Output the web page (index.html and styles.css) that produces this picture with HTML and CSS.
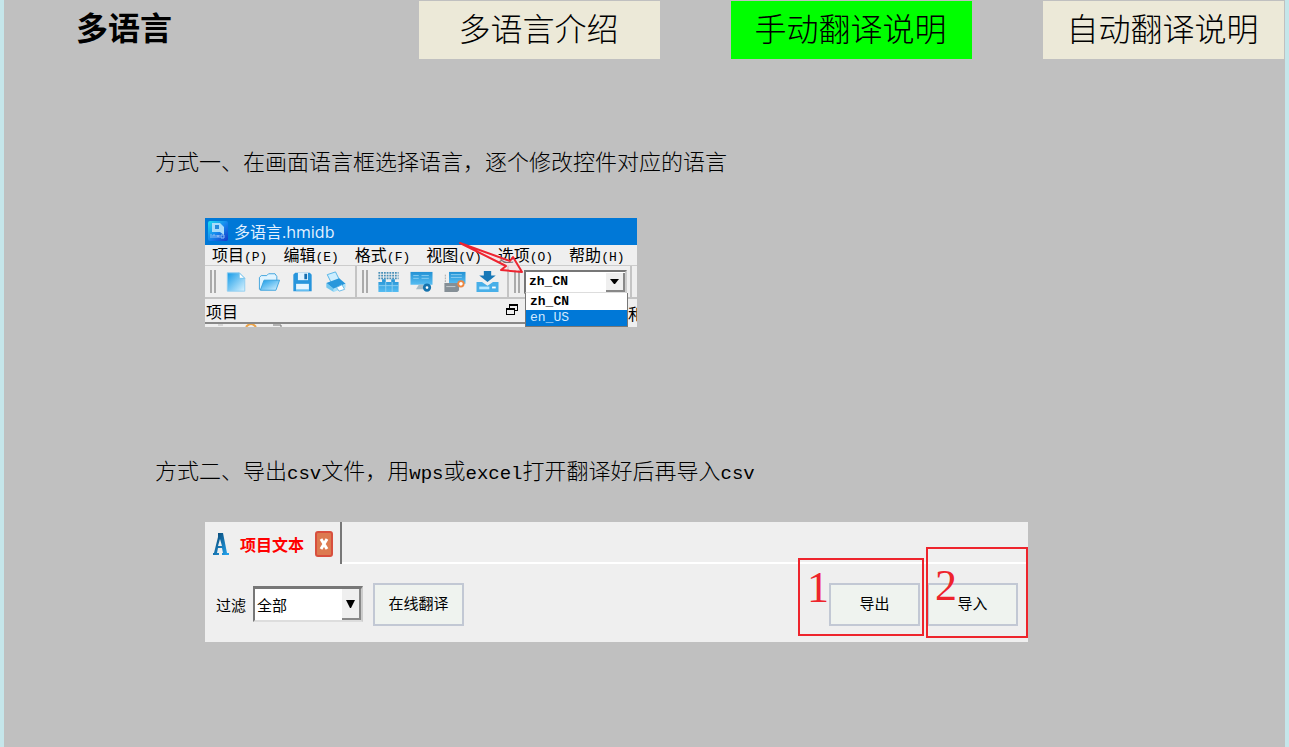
FILE: index.html
```html
<!DOCTYPE html>
<html lang="zh-CN">
<head>
<meta charset="utf-8">
<title>多语言</title>
<link rel="stylesheet" href="styles.css">
</head>
<body>
<header class="topbar">
  <h1 class="title">多语言</h1>
  <nav class="tabs">
    <button class="tab">多语言介绍</button>
    <button class="tab active">手动翻译说明</button>
    <button class="tab">自动翻译说明</button>
  </nav>
</header>
<main>
  <section class="method first">
    <p class="lead">方式一、在画面语言框选择语言，逐个修改控件对应的语言</p>
    <div class="editor">
      <div class="caption">
        <svg width="20" height="20" viewBox="0 0 20 20"><defs><linearGradient id="logo" x1="0" x2="1" y1="0" y2="1"><stop stop-color="#20e0ee"/><stop offset=".5" stop-color="#1689ee"/><stop offset="1" stop-color="#1638c8"/></linearGradient></defs><rect width="20" height="20" rx="2" fill="url(#logo)"/><path d="M4 2h8l4 4v8l-4-3H4z" fill="#a8dcfa"/><path d="M7 4h4v4H7z" fill="#258bdc"/><path d="M3 13v4M5 17V14h2v3M9 17v-3l1 2 1-2v3M13 14v3h3v-3z" fill="none" stroke="#8fbcf4"/></svg>
        <span>多语言.hmidb</span>
      </div>
      <div class="menu">
        <span>项目<i>(P)</i></span><span>编辑<i>(E)</i></span><span>格式<i>(F)</i></span><span>视图<i>(V)</i></span><span>选项<i>(O)</i></span><span>帮助<i>(H)</i></span>
      </div>
      <div class="tools">
        <svg width="0" height="0" class="defs"><defs><linearGradient id="b" x1="0" y1="0" x2="1" y2="1"><stop stop-color="#159be8"/><stop offset="1" stop-color="#d9f3ff"/></linearGradient><linearGradient id="d" x1="0" y1="0" x2="0" y2="1"><stop stop-color="#2492d4"/><stop offset="1" stop-color="#56bdf2"/></linearGradient></defs></svg>
        <span class="grip"></span>
        <button class="tool" aria-label="新建"><svg width="24" height="24" viewBox="0 0 24 24"><path d="M2 2h13l6 6v14H2z" fill="url(#b)" stroke="#8fcdf0"/><path d="M15 2v6h6z" fill="#fff" stroke="#74c2eb"/></svg></button>
        <button class="tool" aria-label="打开"><svg width="24" height="24" viewBox="0 0 24 24"><path d="M1 7l2-2h6l2-2h7l2 3v5H7l-4 9H1z" fill="#e0f4ff" stroke="#3aa1dc"/><path d="M6 10h17l-4 11H2z" fill="url(#b)" stroke="#3aa1dc"/></svg></button>
        <button class="tool" aria-label="保存"><svg width="24" height="24" viewBox="0 0 24 24"><path d="M2 4l2-2h16l2 2v18H2z" fill="#2795dc"/><path d="M7 2h11v8H7z" fill="#dff2ff"/><path d="M14 3h3v6h-3z" fill="#176eaf"/><path d="M5 14h14v7H5z" fill="#e5f5ff"/><path d="M5 20h14v2H5z" fill="#63bdf0"/></svg></button>
        <button class="tool" aria-label="打印"><svg width="24" height="24" viewBox="0 0 24 24"><path d="M3 4l9-3 5 10-9 3z" fill="#cceeff" stroke="#4eb1e6"/><path d="M2 13l14-5 7 6-13 6z" fill="#2897db"/><path d="M2 13v5l8 5v-4z" fill="#73c7ef"/><path d="M10 19l13-5v4l-13 5z" fill="#a6dff8"/><path d="M13 18l6-3 3 5-6 2z" fill="#fff" stroke="#62b8e7"/></svg></button>
        <span class="rule"></span><span class="grip"></span>
        <button class="tool" aria-label="网格"><svg width="24" height="24" viewBox="0 0 24 24"><path d="M1 2h22M1 5h22M1 8h22" stroke="#4a90b8" stroke-width="2" stroke-dasharray="2 1"/><path d="M1 12h4V9h4v3h6V9h4v3h4v11H1z" fill="url(#d)"/><path d="M1 16h22M9 12v11M16 12v11" stroke="#8fd0f2"/></svg></button>
        <button class="tool" aria-label="画面设置"><svg width="24" height="24" viewBox="0 0 24 24"><path d="M0 1h24v14H0z" fill="url(#d)"/><path d="M3 5h6M3 8h6M12 5h8M12 8h8" stroke="#8fd0f2"/><path d="M9 15h5v5H6z" fill="#a7bdc8"/><circle cx="18" cy="18" r="3" fill="#fff" stroke="#1673ad" stroke-width="3"/></svg></button>
        <button class="tool" aria-label="设备设置"><svg width="24" height="24" viewBox="0 0 24 24"><path d="M6 1h18v13H6z" fill="url(#d)"/><path d="M8 4h12M8 7h12" stroke="#8fd0f2"/><path d="M2 4v10h4" fill="none" stroke="#a4a4a4" stroke-dasharray="2 1"/><path d="M1 13h16v8l-2 2H1z" fill="#858f96"/><path d="M3 17h10" stroke="#cbd0d3"/><circle cx="19" cy="14" r="3" fill="#fff" stroke="#ee8741" stroke-width="2"/></svg></button>
        <button class="tool" aria-label="下载"><svg width="24" height="24" viewBox="0 0 24 24"><path d="M8 0h8v5h5l-9 7-9-7h5z" fill="#1778b7"/><path d="M0 12h6l6 4 6-4h6v11H0z" fill="#48afe8"/><path d="M3 17h11v3H3z" fill="#b9e8ff"/><path d="M17 18h4" stroke="#fff" stroke-width="2"/></svg></button>
        <span class="rule"></span><span class="grip"></span>
        <div class="combo lang">
          <select aria-label="画面语言"><option>zh_CN</option><option>en_US</option></select>
          <span class="drop"><svg width="9" height="5" viewBox="0 0 9 5"><path d="M0 0h9L5 5H4z"/></svg></span>
          <div class="options"><span>zh_CN</span><span class="picked">en_US</span></div>
        </div>
        <span class="rule"></span>
      </div>
      <div class="dock">
        <div class="dock-title"><span>项目</span><svg width="12" height="11" viewBox="0 0 12 11"><path d="M3 0h9v7H9v4H0V4h3z"/><path d="M4 2h7v4H9V4H4zM1 6h7v4H1z" fill="#efefef"/></svg></div>
        <div class="dock-side">和</div>
      </div>
      <div class="tree"><svg width="80" height="3" viewBox="0 0 80 3"><path d="M13 1h5" stroke="#bbb"/><path d="M41 3q5-6 10 0" fill="none" stroke="#eba349" stroke-width="2"/><path d="M68 1h8v2" fill="none" stroke="#777"/></svg></div>
      <svg class="pointer" width="66" height="34" viewBox="0 0 66 34"><path d="M1 2L51 20l3-4 9 15-21-2 5-4z" fill="#f8dadd" fill-opacity=".5" stroke="#ee2430" stroke-width="2" stroke-linejoin="round"/></svg>
    </div>
  </section>
  <section class="method second">
    <p class="lead">方式二、导出<span class="latin">csv</span>文件，用<span class="latin">wps</span>或<span class="latin">excel</span>打开翻译好后再导入<span class="latin">csv</span></p>
    <div class="texts">
      <div class="filetabs">
        <div class="filetab">
          <svg width="16" height="24" viewBox="0 0 16 24"><defs><linearGradient id="a" x1="0" y1="0" x2="1" y2="1"><stop stop-color="#073f68"/><stop offset="1" stop-color="#24a7f4"/></linearGradient></defs><path d="M5 1h5l4 20h2v2H9v-2h1l-1-5H5l-1 5h2v2H0v-2h1L5 5zm2 6L5 14h4z" fill="url(#a)" fill-rule="evenodd"/></svg>
          <b>项目文本</b>
          <button class="close" aria-label="关闭"><svg width="18" height="26" viewBox="0 0 18 26"><rect x="1" y="1" width="16" height="24" rx="2" fill="#dd7a50" stroke="#d84f3e" stroke-width="2"/><path d="M6 8l6 10M12 8L6 18" stroke="#fff" stroke-width="3"/></svg></button>
        </div>
        <div class="rest"></div>
      </div>
      <div class="filter">
        <label for="scope">过滤</label>
        <div class="combo scope"><select id="scope"><option>全部</option></select><span class="drop"><svg width="9" height="8" viewBox="0 0 9 8"><path d="M0 0h9L5 8H4z"/></svg></span></div>
        <button class="push">在线翻译</button>
        <div class="actions">
          <div class="action"><button class="push">导出</button><div class="mark one">1</div></div>
          <div class="action"><button class="push">导入</button><div class="mark two">2</div></div>
        </div>
      </div>
    </div>
  </section>
</main>
</body>
</html>
```
FILE: styles.css
```css
* { box-sizing: border-box; }
body {
  margin: 0;
  min-height: 100vh;
  background: #c0c0c0;
  border-left: 4px solid #c5e6ea;
  border-right: 4px solid #c5e6ea;
  color: #000;
  font-family: "Noto Sans CJK SC", sans-serif;
}
button, select { font-family: inherit; color: inherit; border-radius: 0; }
svg { display: block; flex: none; }
.topbar {
  display: flex;
  justify-content: space-between;
  align-items: flex-start;
  padding: 1px 1px 0 72px;
}
.title { margin: 2px 0 0; font-size: 32px; line-height: 46px; font-weight: 700; }
.tabs { display: flex; gap: 71px; }
.tab {
  width: 241px;
  height: 58px;
  padding: 0 2px 6px 0;
  border: 0;
  background: #ece9d8;
  font-size: 32px;
  line-height: 46px;
  font-weight: 300;
}
.tab.active { background: #0f0; }
.method { padding-left: 201px; }
.first { padding-top: 85px; }
.second { padding-top: 126px; padding-right: 257px; }
.lead { margin: 0 0 41px -50px; font-size: 22px; line-height: 33px; font-weight: 300; white-space: nowrap; }
.latin { font-family: "Liberation Mono", monospace; font-size: 19px; line-height: 22px; }
.second .lead { margin-bottom: 36px; height: 33px; }

.editor { position: relative; width: 432px; background: #efefef; }
.caption {
  display: flex;
  align-items: center;
  gap: 6px;
  height: 27px;
  padding: 0 0 2px 3px;
  background: #0078d7;
  color: #e4f1ff;
  font-family: "Open Sans", "Noto Sans CJK SC", sans-serif;
  font-size: 16px;
}
.menu { display: flex; gap: 16px; height: 20px; padding-left: 7px; font-size: 16px; line-height: 18px; white-space: nowrap; }
.menu i { font: 13px "Liberation Mono", monospace; }
.tools { position: relative; display: flex; align-items: center; height: 34px; border-top: 1px solid #ccc; border-bottom: 2px solid #c4c4c4; }
.defs { position: absolute; }
.grip { width: 6px; height: 23px; margin: 0 4px 0 5px; border: solid #aaa; border-width: 0 2px; }
.tool { width: 33px; height: 26px; padding: 0; border: 0; background: none; display: grid; place-items: center; }
.tool svg { width: 23px; height: 22px; }
.rule { width: 2px; height: 31px; margin-left: 3px; background: #c4c4c4; }
.combo { position: relative; }
.combo select {
  appearance: none;
  display: block;
  width: 100%;
  height: 100%;
  padding: 0 3px;
  border: 2px solid #777;
  border-right-color: #ccc;
  border-bottom-color: #ddd;
  background: #fff;
}
.drop {
  position: absolute;
  top: 3px;
  right: 2px;
  bottom: 2px;
  width: 19px;
  display: grid;
  place-items: center;
  background: #efefef;
  border: solid #888;
  border-width: 0 2px 2px 0;
  pointer-events: none;
}
.lang { width: 103px; height: 24px; font-family: "Liberation Mono", monospace; }
.lang select { font-size: 13px; font-weight: 700; }
.options {
  position: absolute;
  z-index: 2;
  top: 23px;
  left: 1px;
  right: -1px;
  border: 1px solid #777;
  border-top: 0;
  background: #fff;
  font-size: 13px;
  font-weight: 700;
}
.options span { display: block; height: 17px; padding-left: 4px; line-height: 17px; }
.options .picked { background: #0078d7; color: #d4eaff; font-weight: 400; height: 16px; line-height: 16px; }
.dock { display: flex; height: 23px; font-size: 16px; line-height: 24px; }
.dock-title { display: flex; flex: 1; align-items: center; justify-content: space-between; padding: 0 1px; }
.dock-title svg { margin-bottom: 2px; }
.dock-side { width: 9px; margin-left: 109px; overflow: hidden; line-height: 28px; }
.tree { width: 321px; height: 5px; border-top: 2px solid #888; }
.pointer { position: absolute; z-index: 3; left: 254px; top: 23px; }

.texts { background: #efefef; padding-bottom: 16px; font-size: 15px; }
.filetabs { display: flex; height: 42px; }
.filetab { display: flex; align-items: center; gap: 11px; padding: 1px 7px 0 8px; border-right: 2px solid #777; color: #f00; font-size: 16px; }
.filetab b { white-space: nowrap; }
.close { padding: 0; border: 0; background: none; }
.rest { flex: 1; border-bottom: 2px solid #fff; }
.filter { display: flex; align-items: center; height: 62px; padding: 18px 10px 0 11px; }
.scope { width: 110px; height: 36px; margin: 0 10px 0 7px; }
.scope select { font-size: 15px; padding: 0 2px; border-width: 3px 2px 2px; }
.push { width: 91px; height: 43px; padding: 0 0 3px; border: 2px solid #c2c8d4; background: #eff3ef; font-size: 15px; }
.actions { display: flex; gap: 7px; margin-left: auto; }
.action { position: relative; }
.mark {
  position: absolute;
  border: 2px solid #ee242c;
  color: #ee242c;
  font: 44px/48px "Liberation Serif", serif;
  padding-left: 7px;
  pointer-events: none;
}
.one { left: -31px; right: -4px; top: -25px; bottom: -10px; padding-top: 4px; }
.two { left: -1px; right: -10px; top: -36px; bottom: -12px; padding-top: 13px; }
```
